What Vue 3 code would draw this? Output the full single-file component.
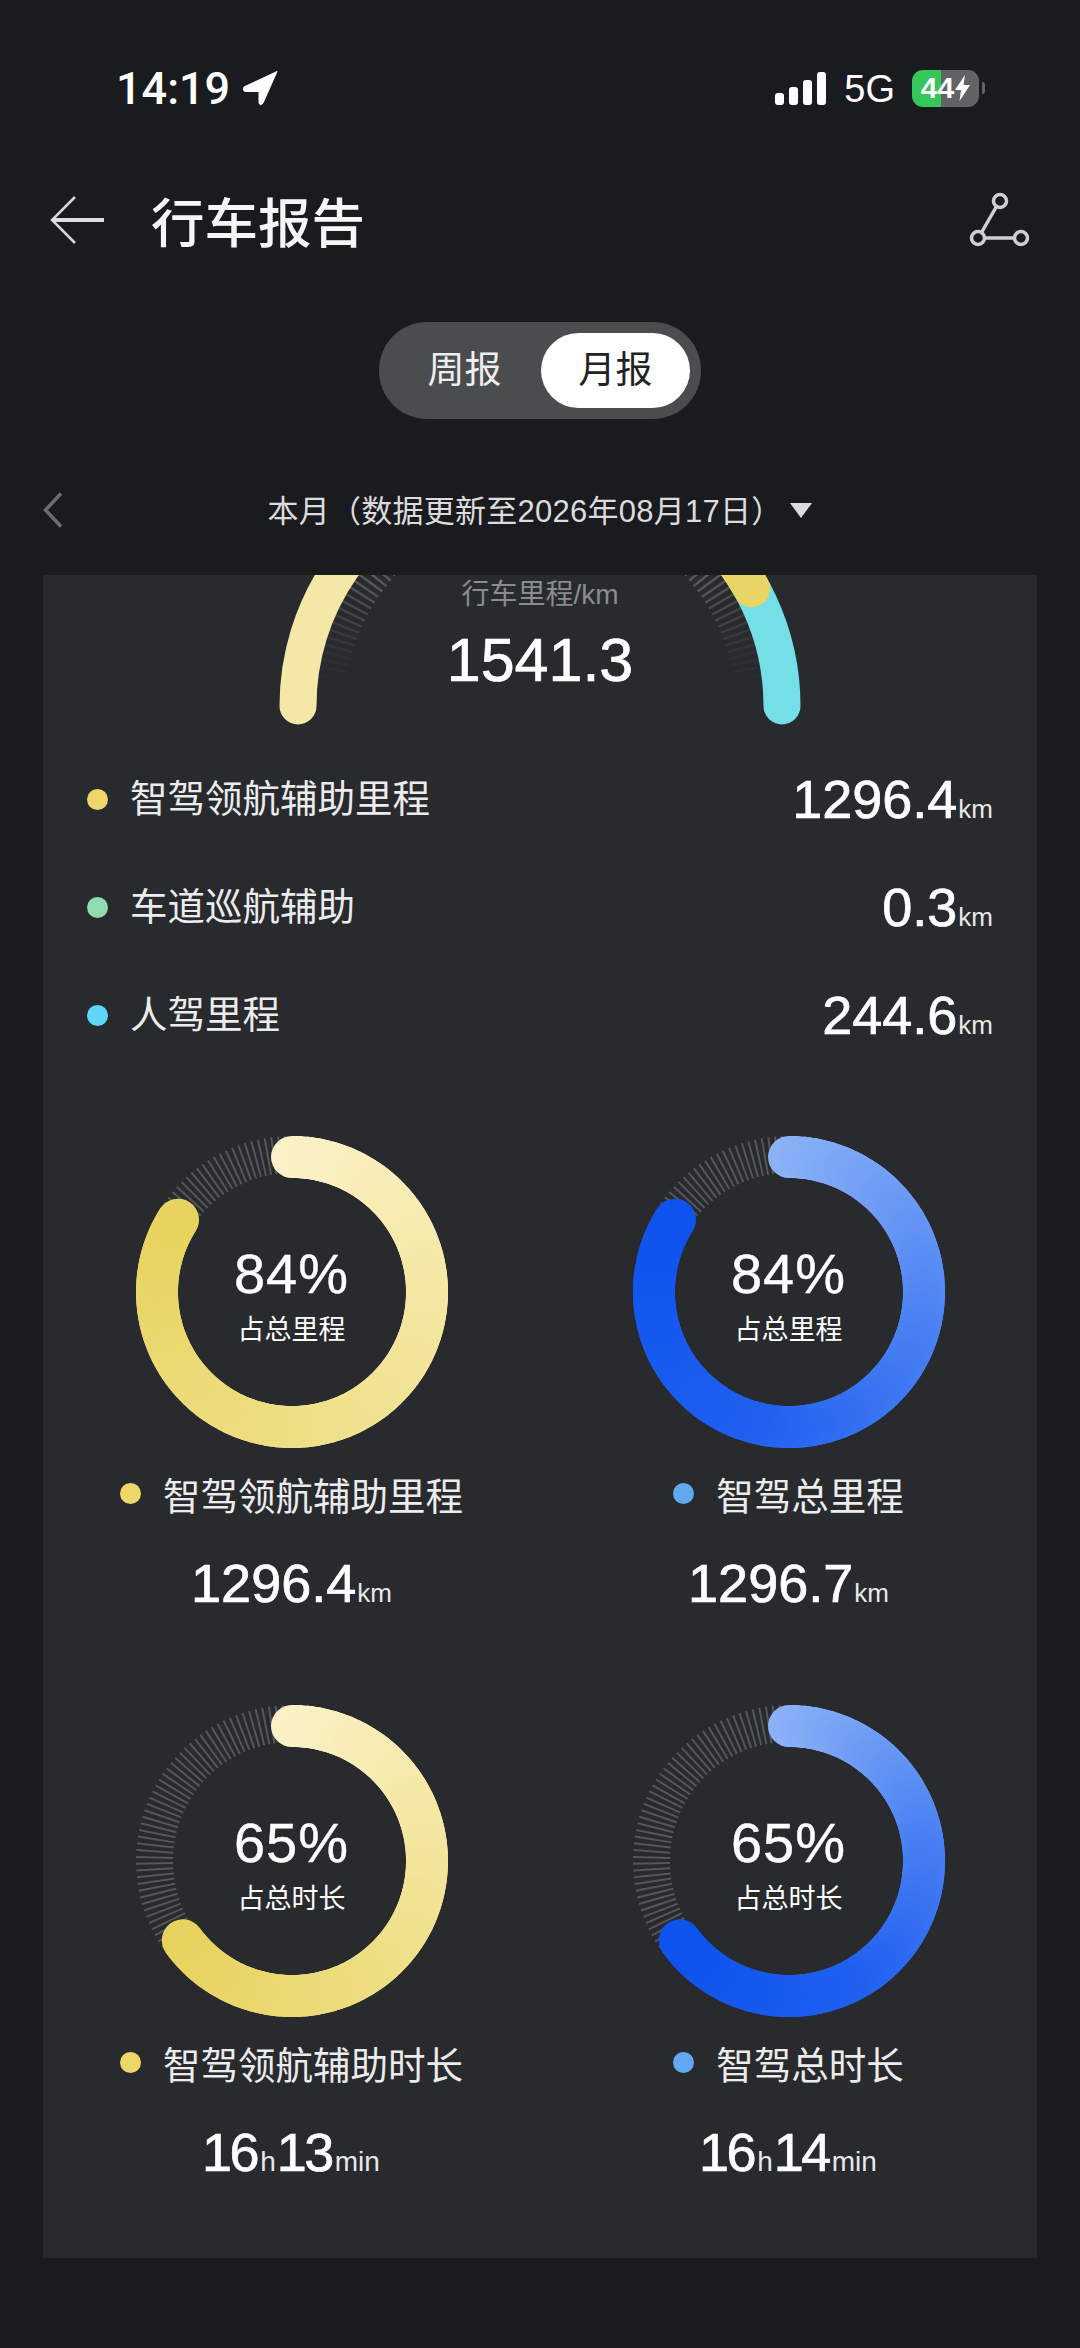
<script setup>
// one row of the mileage list
const rows = [
  { label: '智驾领航辅助里程', value: '1296.4', color: '#ecd768' },
  { label: '车道巡航辅助', value: '0.3', color: '#8fdcb0' },
  { label: '人驾里程', value: '244.6', color: '#5fd8f8' }
];

const yellow = ['#fbf1c8', '#f4e7a2', '#eddd80', '#e8d35f'];
const blue = ['#8cb2f6', '#4f84f3', '#1f60f0', '#0e53ee'];

const polar = (c, r, deg) => {
  const a = (deg * Math.PI) / 180;
  return [c[0] + r * Math.sin(a), c[1] - r * Math.cos(a)];
};

const arc = (c, r, from, to) => {
  const p = polar(c, r, from);
  const q = polar(c, r, to);
  return `M${p[0].toFixed(2)} ${p[1].toFixed(2)}A${r} ${r} 0 0 1 ${q[0].toFixed(2)} ${q[1].toFixed(2)}`;
};

const hex = s => [1, 3, 5].map(i => parseInt(s.slice(i, i + 2), 16));

// colour along the ring, stops are spread over 0..1
const mix = (stops, t) => {
  const pos = Math.min(t * (stops.length - 1), stops.length - 1.001);
  const i = Math.floor(pos);
  const a = hex(stops[i]);
  const b = hex(stops[i + 1]);
  const c = a.map((v, k) => Math.round(v + (b[k] - v) * (pos - i)));
  return `rgb(${c.join(',')})`;
};

const ringParts = (percent, stops) => {
  const c = [160, 160];
  const end = percent * 3.6;
  const parts = [];
  for (let a = 0; a < end; a += 2) {
    parts.push({ d: arc(c, 135, a, Math.min(a + 2, end)), color: mix(stops, a / end) });
  }
  return parts;
};

const ringTicks = percent => {
  const c = [160, 160];
  const ticks = [];
  for (let a = percent * 3.6; a < 360; a += 2.5) {
    const p = polar(c, 119, a);
    const q = polar(c, 156, a);
    ticks.push({ x1: p[0], y1: p[1], x2: q[0], y2: q[1] });
  }
  return ticks;
};

const rings = [
  { percent: 84, stops: yellow, sub: '占总里程', label: '智驾领航辅助里程', dot: '#ecd768', parts: [['1296.4', 'km']] },
  { percent: 84, stops: blue, sub: '占总里程', label: '智驾总里程', dot: '#62a8ef', parts: [['1296.7', 'km']] },
  { percent: 65, stops: yellow, sub: '占总时长', label: '智驾领航辅助时长', dot: '#ecd768', parts: [['16', 'h'], ['13', 'min']] },
  { percent: 65, stops: blue, sub: '占总时长', label: '智驾总时长', dot: '#62a8ef', parts: [['16', 'h'], ['14', 'min']] }
].map(r => ({ ...r, arcs: ringParts(r.percent, r.stops), ticks: ringTicks(r.percent) }));

// top gauge, cut off by the card edge
const gaugeCenter = [497, 131];
const gaugeLeft = arc(gaugeCenter, 242, 270, 340);
const gaugeCyan = arc(gaugeCenter, 242, 40, 90);
const gaugeYellow = arc(gaugeCenter, 242, 20, 61);
const gaugeTicks = [];
for (let a = -90; a <= 90; a += 2) {
  const p = polar(gaugeCenter, 195, a);
  const q = polar(gaugeCenter, 224, a);
  const fade = Math.max(0, (131 - p[1]) / 131);
  gaugeTicks.push({ x1: p[0], y1: p[1], x2: q[0], y2: q[1], opacity: Math.min(1, fade * fade * 1.3) });
}
</script>

<template>
  <div class="page">
    <div class="status">
      <span class="time">14:19</span>
      <svg class="locate" width="36" height="36" viewBox="0 0 36 36">
        <path d="M35 1.500 2 17Q0 21.500 4 21.500H17V33Q18.500 36.500 21 33Z" fill="#fff" stroke="#fff" stroke-width="1" />
      </svg>
      <div class="status-right">
        <div class="signal">
          <i class="bar b1"></i><i class="bar b2"></i><i class="bar b3"></i><i class="bar b4"></i>
        </div>
        <span class="net">5G</span>
        <div class="battery">
          <span>44</span>
          <svg width="15" height="26" viewBox="0 0 15 26">
            <path d="M10 0 0 15H6L4.500 26 15 10H8.500Z" fill="#fff" />
          </svg>
        </div>
        <i class="nub"></i>
      </div>
    </div>

    <div class="nav">
      <svg class="back" width="56" height="50" viewBox="0 0 56 50">
        <path d="M25 2 2 25 25 48" fill="none" stroke="#d6d6d6" stroke-width="2.500" />
        <path d="M2 25H54" fill="none" stroke="#dedede" stroke-width="4" />
      </svg>
      <h1 class="title">行车报告</h1>
      <svg class="share" width="62" height="56" viewBox="0 0 62 56">
        <g fill="none" stroke="#cfcfcf" stroke-width="3.500">
          <circle cx="31" cy="9" r="6.500" />
          <circle cx="9" cy="46" r="6.500" />
          <circle cx="52" cy="46" r="6.500" />
          <path d="M27.500 14.500 12.500 40.500M15.500 46H45.500" />
        </g>
      </svg>
    </div>

    <div class="switch">
      <span class="tab">周报</span>
      <span class="tab active">月报</span>
    </div>

    <div class="range">
      <svg width="20" height="36" viewBox="0 0 20 36">
        <path d="M18 1.500 2.500 18 18 34.500" fill="none" stroke="#6a6c6e" stroke-width="3.500" />
      </svg>
      <div class="range-text">
        <span>本月（数据更新至2026年08月17日）</span>
        <i class="caret"></i>
      </div>
    </div>

    <div class="card">
      <div class="gauge">
        <svg class="gauge-art" width="994" height="170" viewBox="0 0 994 170">
          <line
            v-for="(t, i) in gaugeTicks"
            :key="i"
            :x1="t.x1"
            :y1="t.y1"
            :x2="t.x2"
            :y2="t.y2"
            :opacity="t.opacity"
            stroke="#55585a"
            stroke-width="2.500"
          />
          <g fill="none" stroke-width="37" stroke-linecap="round">
            <path :d="gaugeLeft" stroke="#f5e7a8" />
            <path :d="gaugeCyan" stroke="#74dfe6" />
            <path :d="gaugeYellow" stroke="#e8d566" />
          </g>
        </svg>
        <div class="gauge-text">
          <div class="gauge-label">行车里程/km</div>
          <div class="gauge-value">1541.3</div>
        </div>
      </div>

      <div v-for="row in rows" :key="row.label" class="row">
        <i class="dot" :style="{ background: row.color }"></i>
        <span class="row-label">{{ row.label }}</span>
        <span class="num">{{ row.value }}<small>km</small></span>
      </div>

      <div class="rings">
        <div v-for="ring in rings" :key="ring.label" class="ring-cell">
          <div class="ring">
            <svg class="ring-art" width="320" height="320" viewBox="0 0 320 320">
              <line
                v-for="(t, i) in ring.ticks"
                :key="i"
                :x1="t.x1"
                :y1="t.y1"
                :x2="t.x2"
                :y2="t.y2"
                stroke="#54575a"
                stroke-width="2"
              />
              <g fill="none" stroke-width="42" stroke-linecap="round">
                <path v-for="(p, i) in ring.arcs" :key="i" :d="p.d" :stroke="p.color" />
              </g>
            </svg>
            <div class="ring-text">
              <div class="percent">{{ ring.percent }}%</div>
              <div class="sub">{{ ring.sub }}</div>
            </div>
          </div>
          <div class="ring-label">
            <i class="dot" :style="{ background: ring.dot }"></i>
            <span>{{ ring.label }}</span>
          </div>
          <div class="ring-value num" :class="{ duration: ring.parts.length > 1 }">
            <template v-for="p in ring.parts" :key="p[1]">{{ p[0] }}<small>{{ p[1] }}</small></template>
          </div>
        </div>
      </div>
    </div>
  </div>
</template>

<style scoped>
.page {
  width: 1080px;
  height: 2348px;
  background: #1a1b1f;
  color: #fff;
  font-family: "Liberation Sans", "Noto Sans CJK SC", sans-serif;
  overflow: hidden;
}

.status {
  height: 176px;
  display: flex;
  align-items: center;
  padding: 0 95px 0 116px;
  box-sizing: border-box;
}
.time {
  font-family: Roboto, "Liberation Sans", sans-serif;
  font-weight: 500;
  font-size: 45px;
}
.locate {
  margin-left: 12px;
}
.status-right {
  margin-left: auto;
  display: flex;
  align-items: center;
}
.signal {
  display: flex;
  align-items: flex-end;
  gap: 5px;
  height: 33px;
}
.bar {
  width: 9px;
  background: #fff;
  border-radius: 3px;
}
.b1 { height: 12px; }
.b2 { height: 18px; }
.b3 { height: 25px; }
.b4 { height: 33px; }
.net {
  margin: 2px 0 0 18px;
  font-size: 38px;
  line-height: 40px;
  font-family: "Liberation Sans", sans-serif;
}
.battery {
  margin-left: 17px;
  width: 67px;
  height: 37px;
  border-radius: 11px;
  background: linear-gradient(90deg, #35c759 43%, #636366 43%);
  display: flex;
  align-items: center;
  justify-content: center;
  gap: 1px;
  font-size: 30px;
  font-weight: 700;
}
.nub {
  margin-left: 3px;
  width: 3px;
  height: 12px;
  background: #636366;
  border-radius: 0 3px 3px 0;
}

.nav {
  height: 88px;
  display: flex;
  align-items: center;
  padding: 0 49px 0 50px;
}
.title {
  margin: -2px 0 0 45px;
  font-size: 53.500px;
  font-weight: 500;
  color: #f6f6f6;
}
.share {
  margin-left: auto;
}

.switch {
  margin: 58px auto 0;
  width: 322px;
  height: 97px;
  padding: 11px;
  box-sizing: border-box;
  border-radius: 48px;
  background: #4a4c4e;
  display: flex;
  justify-content: space-between;
}
.tab {
  width: 149px;
  border-radius: 38px;
  text-align: center;
  line-height: 76px;
  font-size: 37px;
  color: #efefef;
}
.active {
  background: #fff;
  color: #222;
}

.range {
  margin-top: 56px;
  height: 70px;
  padding: 0 43px;
  display: grid;
  grid-template-columns: 1fr auto 1fr;
  align-items: center;
}
.range-text {
  display: flex;
  align-items: center;
  gap: 8px;
  font-size: 31px;
  letter-spacing: 0.25px;
  color: #dcdcdc;
}
.range-text span {
  margin-top: -3px;
}
.caret {
  width: 0;
  height: 0;
  border-left: 11px solid transparent;
  border-right: 11px solid transparent;
  border-top: 15px solid #dcdcdc;
}

.card {
  margin: 30px 43px 0;
  height: 1683px;
  background: #282a2e;
}

.gauge {
  height: 170px;
  display: grid;
}
.gauge-art,
.gauge-text {
  grid-area: 1 / 1;
}
.gauge-text {
  text-align: center;
  padding-top: 3px;
}
.gauge-label {
  font-size: 28px;
  line-height: 34px;
  color: #8a8c8e;
}
.gauge-value {
  margin-top: 10px;
  font-size: 61px;
  line-height: 76px;
  color: #fff;
  -webkit-text-stroke: 0.7px #fff;
}

.row {
  height: 108px;
  display: flex;
  align-items: center;
  padding: 0 44px;
}
.dot {
  width: 21px;
  height: 21px;
  border-radius: 50%;
  flex: none;
}
.row-label {
  margin-left: 22px;
  font-size: 37.500px;
  line-height: 44px;
  color: #ececec;
}
.row .num {
  margin-left: auto;
}
.num {
  font-size: 54px;
  color: #fff;
  -webkit-text-stroke: 0.7px #fff;
}
.num small {
  font-size: 26px;
  margin-left: 1px;
  color: #e8e8e8;
  -webkit-text-stroke: 0;
}
.duration {
  letter-spacing: -2.500px;
}
.duration small {
  font-size: 28px;
  letter-spacing: 0;
  margin: 0 1px 0 3px;
}

.rings {
  padding-top: 63px;
  display: grid;
  grid-template-columns: 1fr 1fr;
  row-gap: 88px;
}
.ring-cell {
  display: flex;
  flex-direction: column;
  align-items: center;
}
.ring {
  display: grid;
  width: 320px;
  height: 320px;
}
.ring-art,
.ring-text {
  grid-area: 1 / 1;
}
.ring-text {
  align-self: center;
  text-align: center;
  padding-top: 6px;
}
.percent {
  font-size: 56px;
  line-height: 62px;
  letter-spacing: 1px;
  -webkit-text-stroke: 0.4px #fff;
}
.sub {
  margin-top: 8px;
  font-size: 27px;
  line-height: 34px;
}
.ring-label {
  margin-top: 16px;
  height: 50px;
  display: flex;
  align-items: center;
  gap: 22px;
  font-size: 37.500px;
  color: #ececec;
}
.ring-value {
  margin-top: 35px;
  height: 60px;
  line-height: 60px;
}
</style>

<style>
html,
body {
  margin: 0;
  background: #1a1b1f;
}
</style>
